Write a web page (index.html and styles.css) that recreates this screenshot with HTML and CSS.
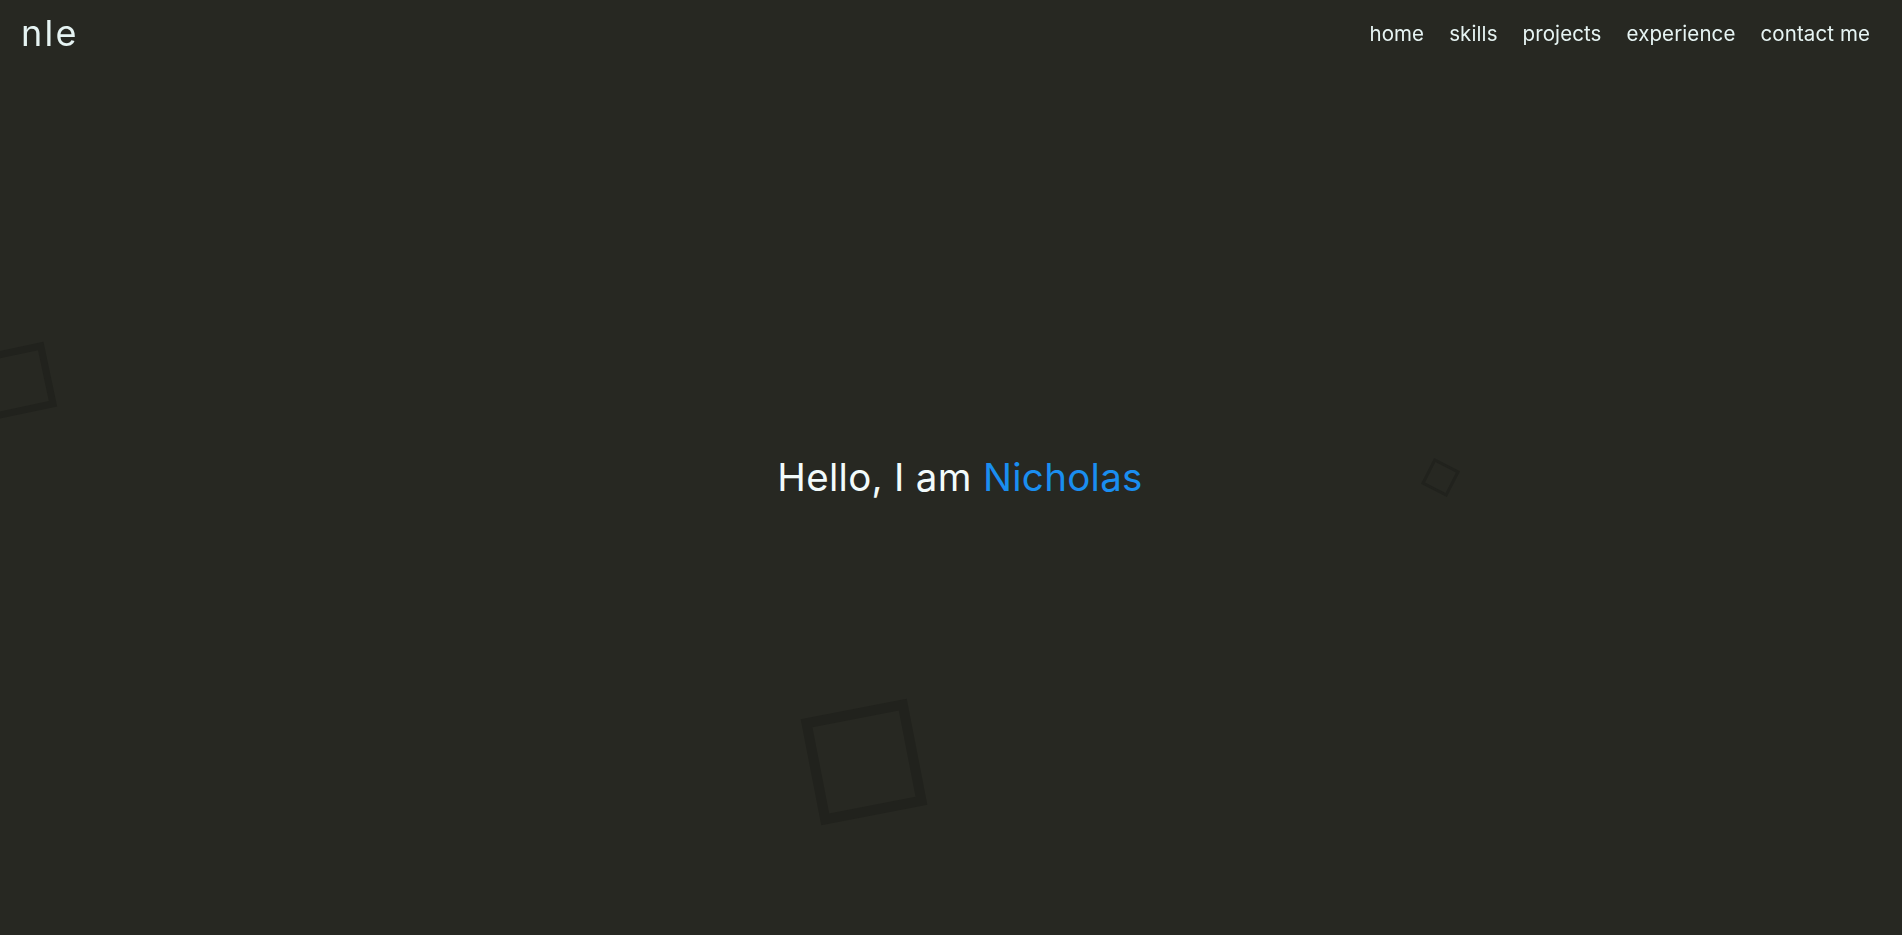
FILE: index.html
```html
<!DOCTYPE html>
<html lang="en">
<head>
<meta charset="utf-8">
<title>nle</title>
<link rel="stylesheet" href="styles.css">
</head>
<body>
<header class="topbar">
  <a class="logo" href="#">nle</a>
  <nav class="nav">
    <a href="#">home</a>
    <a href="#">skills</a>
    <a href="#">projects</a>
    <a href="#">experience</a>
    <a href="#">contact me</a>
  </nav>
</header>
<main class="hero">
  <div class="shape shape-left"></div>
  <div class="shape shape-small"></div>
  <div class="shape shape-big"></div>
  <h1 class="greeting">Hello, I am <span class="name">Nicholas</span></h1>
</main>
</body>
</html>
```

FILE: styles.css
```css
* { box-sizing: border-box; }
html, body { margin: 0; padding: 0; }
body {
  background: #272822;
  color: #e6f4f3;
  font-family: "Inter", "Liberation Sans", sans-serif;
  overflow: hidden;
}
a { color: inherit; text-decoration: none; }

.topbar {
  position: fixed;
  top: 0; left: 0; right: 0;
  z-index: 2;
  display: flex;
  justify-content: space-between;
  align-items: flex-start;
  padding: 13px 32px 0 21px;
}
.logo {
  font-size: 36px;
  line-height: 40px;
  font-weight: 400;
  letter-spacing: 2.2px;
}
.nav {
  display: flex;
  gap: 25px;
  padding-top: 9px;
}
.nav a {
  font-size: 20.5px;
  line-height: 24px;
  font-weight: 400;
  letter-spacing: 0.1px;
}

.hero {
  position: relative;
  height: 100vh;
  display: flex;
  align-items: center;
  justify-content: center;
  padding: 18px 0 0 18px;
}
.greeting {
  margin: 0;
  font-size: 38.5px;
  font-weight: 400;
  color: #f2fbfb;
  letter-spacing: 0.3px;
}
.name { color: #1a8ef0; }

.shape {
  position: absolute;
  border-style: solid;
  border-color: #21221d;
}
.shape-left {
  width: 66px; height: 66px;
  border-width: 7px;
  left: -15px; top: 348px;
  transform: rotate(-12deg);
}
.shape-small {
  width: 29px; height: 29px;
  border-width: 3px;
  left: 1426px; top: 463px;
  transform: rotate(27deg);
}
.shape-big {
  width: 108px; height: 108px;
  border-width: 10px;
  left: 810px; top: 708px;
  transform: rotate(-11deg);
}
```
